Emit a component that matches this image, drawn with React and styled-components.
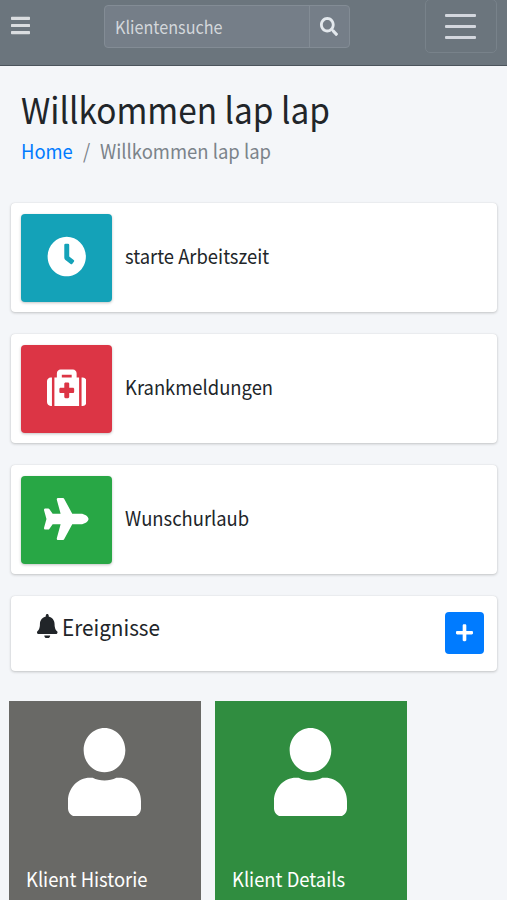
import React from 'react'
import styled, {createGlobalStyle} from 'styled-components'
import {FaBars, FaSearch, FaClock, FaMedkit, FaPlane, FaBell, FaPlus, FaUser} from 'react-icons/fa'

const GlobalStyle = createGlobalStyle`
  *{
    box-sizing: border-box;
  }
  body{
    margin: 0;
    background: #f4f6f9;
    color: #212529;
    font-family: "Noto Sans CJK JP", "Noto Sans", sans-serif;
  }
  h1, h3, p, ul, ol{
    margin: 0;
    padding: 0;
    font-weight: 400;
    list-style: none;
  }
  button{
    font: inherit;
    padding: 0;
    cursor: pointer;
  }
`
const Page = styled.div`
    height: 900px;
    overflow: hidden;
`
const Label = styled.span`
    display: inline-block;
    white-space: nowrap;
    font-size: ${({size}) => size}px;
    line-height: ${({size}) => Math.round(size * 1.3)}px;
    transform: scaleX(${({stretch}) => stretch || .92});
    transform-origin: left center;
`
const Navbar = styled.nav`
    display: flex;
    align-items: flex-start;
    height: 66px;
    padding-left: 10.5px;
    background: #6b757d;
    border-bottom: 1px solid #4b545c;
`
const MenuButton = styled.button`
    display: flex;
    margin-top: 14px;
    border: none;
    background: none;
    color: #dadde0;
`
const SearchForm = styled.form`
    display: flex;
    width: 246px;
    height: 43px;
    margin: 5px 0 0 74px;
    border: 1px solid #838c95;
    border-radius: 4px;
    background: #757e88;
    color: #d3d7db;
    overflow: hidden;
`
const SearchField = styled.div`
    display: flex;
    flex: 1;
    align-items: center;
    padding-left: 10.5px;
`
const SearchButton = styled.button`
    display: flex;
    align-items: center;
    justify-content: center;
    width: 40px;
    padding-bottom: 1px;
    border: none;
    border-left: 1px solid #838c95;
    background: none;
    color: #e3e8ed;
`
const Toggler = styled.button`
    display: flex;
    flex-direction: column;
    align-items: center;
    gap: 8px;
    width: 72px;
    height: 54px;
    margin: -1px 0 0 75px;
    padding-top: 14px;
    border: 1px solid #78828a;
    border-radius: 5px;
    background: none;
`
const TogglerLine = styled.span`
    width: 31px;
    height: 3px;
    border-radius: 1px;
    background: #d3d7de;
`
const Header = styled.header`
    height: 137px;
    padding: 19px 21px 0 20.5px;
    h1{
      display: flex;
      height: 47px;
    }
`
const Breadcrumb = styled.ol`
    display: flex;
    margin-top: 6px;
    color: #7b838a;
    li:first-child{
      width: 62.5px;
      color: #007bff;
    }
    li:nth-child(2){
      width: 17px;
    }
`
const Cards = styled.div`
    display: flex;
    flex-direction: column;
    gap: 22px;
    padding: 0 10px 0 11px;
`
const Card = styled.section`
    display: flex;
    background: #fff;
    border-radius: 4px;
    box-shadow: 0 0 1px rgba(0,0,0,.125), 0 1px 3px rgba(0,0,0,.2);
`
const InfoBox = styled(Card)`
    align-items: center;
    gap: 12.5px;
    height: 109px;
    padding: 0 0 0 10px;
    ${Label}{
      margin-bottom: 3px;
    }
`
const InfoIcon = styled.div`
    display: flex;
    align-items: center;
    justify-content: center;
    width: 91px;
    height: 88px;
    padding-bottom: 2px;
    border-radius: 4px;
    background: ${({color}) => color};
    color: #fff;
    box-shadow: 0 1px 3px rgba(0,0,0,.24);
`
const Events = styled(Card)`
    justify-content: space-between;
    height: 75px;
    padding: 16px 13px 0 26px;
    h3{
      display: flex;
      height: 28px;
      align-items: center;
      gap: 4px;
    }
`
const AddButton = styled.button`
    display: flex;
    align-items: center;
    justify-content: center;
    width: 39.5px;
    height: 42px;
    padding-bottom: 1px;
    border: none;
    border-radius: 4px;
    background: #007bff;
    color: #fff;
`
const Tiles = styled.div`
    display: flex;
    gap: 13.5px;
    padding: 30px 0 0 8.6px;
`
const Tile = styled.div`
    display: flex;
    flex-direction: column;
    width: 192.5px;
    height: 210px;
    padding: 26.5px 17px 0;
    background: ${({color}) => color};
    color: #fff;
    svg{
      align-self: center;
      margin-bottom: 50px;
    }
`

const boxes = [
    {text: 'starte Arbeitszeit', color: '#14a2b8', Icon: FaClock, width: 39.5, height: 41},
    {text: 'Krankmeldungen', color: '#dc3545', Icon: FaMedkit, width: 39.5, height: 41.5},
    {text: 'Wunschurlaub', color: '#28a745', Icon: FaPlane, width: 44.5, height: 42},
]
const tiles = [
    {text: 'Klient Historie', color: '#696966'},
    {text: 'Klient Details', color: '#308d40'},
]

// icons are a little taller than their native ratio
function StretchIcon({icon: Icon, width, height}) {
    return <Icon preserveAspectRatio="none" style={{width, height, flexShrink: 0}} />
}

function App() {
    return (
        <Page>
            <GlobalStyle />
            <Navbar>
                <MenuButton aria-label="Menü"><StretchIcon icon={FaBars} width={19} height={23} /></MenuButton>
                <SearchForm>
                    <SearchField><Label size={17.5} stretch={.925}>Klientensuche</Label></SearchField>
                    <SearchButton type="button" aria-label="Suche"><StretchIcon icon={FaSearch} width={18} height={19} /></SearchButton>
                </SearchForm>
                <Toggler aria-label="Navigation">
                    <TogglerLine />
                    <TogglerLine />
                    <TogglerLine />
                </Toggler>
            </Navbar>
            <Header>
                <h1><Label size={36} stretch={.927}>Willkommen lap lap</Label></h1>
                <Breadcrumb>
                    <li><Label size={20}>Home</Label></li>
                    <li><Label size={20}>/</Label></li>
                    <li><Label size={20} stretch={.924}>Willkommen lap lap</Label></li>
                </Breadcrumb>
            </Header>
            <Cards>
                {boxes.map(({text, color, Icon, width, height}) => (
                    <InfoBox key={text}>
                        <InfoIcon color={color}><StretchIcon icon={Icon} width={width} height={height} /></InfoIcon>
                        <Label size={20}>{text}</Label>
                    </InfoBox>
                ))}
                <Events>
                    <h3><StretchIcon icon={FaBell} width={20.5} height={24.5} /><Label size={22.5}>Ereignisse</Label></h3>
                    <AddButton aria-label="Neu"><StretchIcon icon={FaPlus} width={17} height={19.5} /></AddButton>
                </Events>
            </Cards>
            <Tiles>
                {tiles.map(({text, color}) => (
                    <Tile key={text} color={color}>
                        <StretchIcon icon={FaUser} width={73} height={88.5} />
                        <Label size={20}>{text}</Label>
                    </Tile>
                ))}
            </Tiles>
        </Page>
    )
}

export default App
